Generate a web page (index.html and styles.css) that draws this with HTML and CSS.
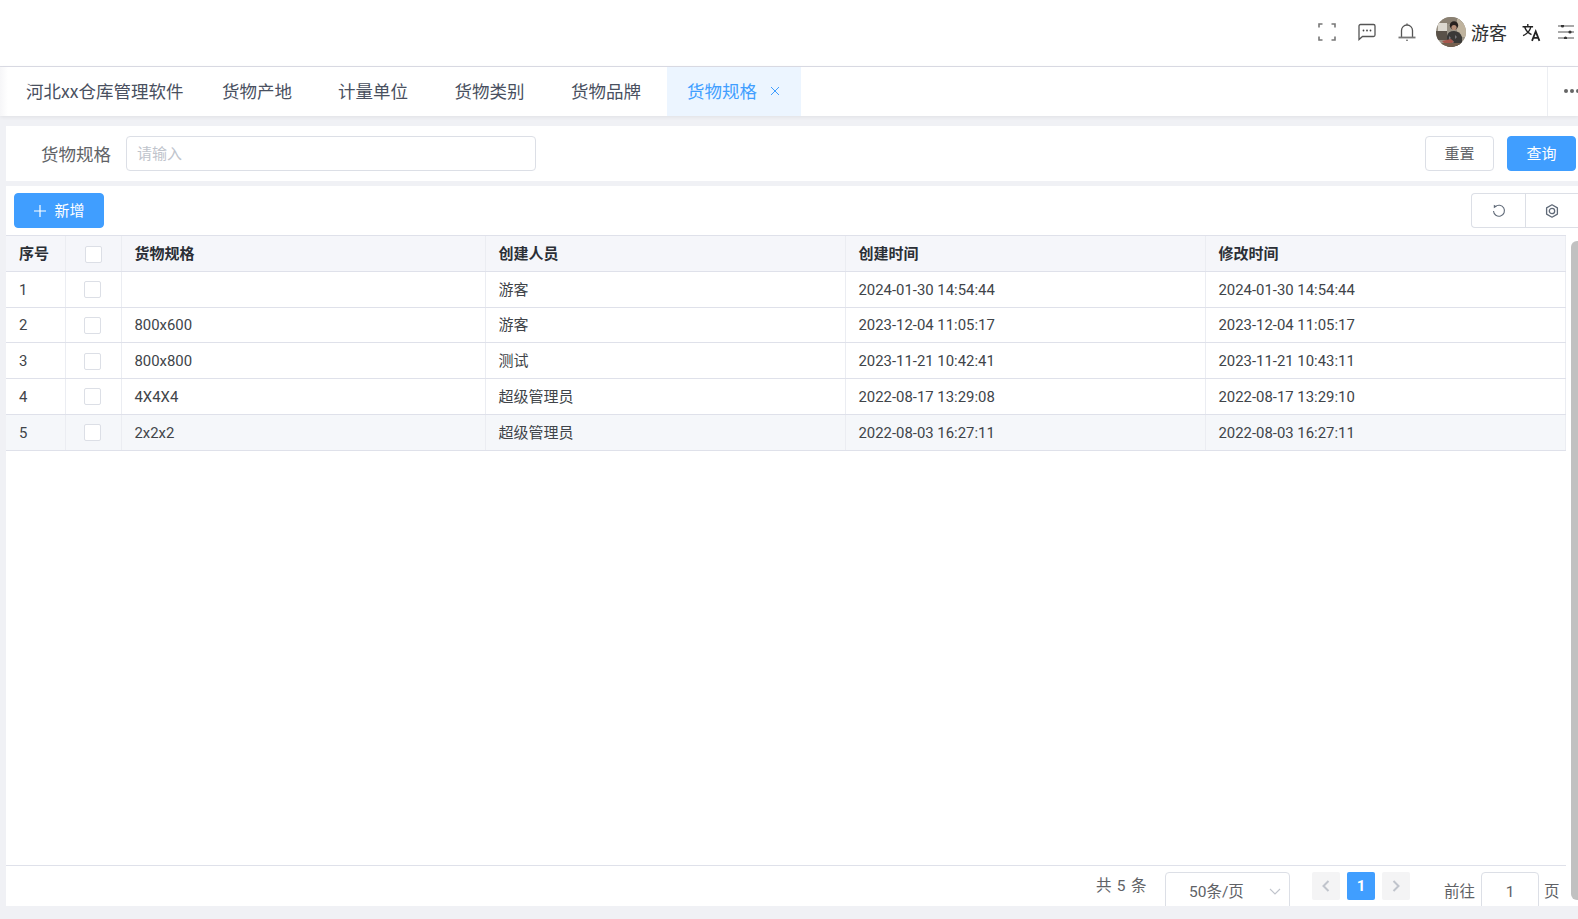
FILE: index.html
```html
<!DOCTYPE html>
<html lang="zh-CN">
<head>
<meta charset="utf-8">
<title>货物规格</title>
<link rel="stylesheet" href="styles.css">
</head>
<body>
<div class="app">
  <header class="topbar">
    <svg class="ti ti-full" viewBox="0 0 18 18"><path d="M1 4.500V1h3.500M13.500 1H17v3.500M17 13.500V17h-3.500M4.500 17H1v-3.500"/></svg>
    <svg class="ti ti-msg" viewBox="0 0 18 18"><path d="M1 16.500V3a1.500 1.500 0 0 1 1.500-1.500h13A1.500 1.500 0 0 1 17 3v9a1.500 1.500 0 0 1-1.500 1.500H4.500L1 16.500z"/><circle class="dot" cx="5.500" cy="7.500" r=".9"/><circle class="dot" cx="9" cy="7.500" r=".9"/><circle class="dot" cx="12.500" cy="7.500" r=".9"/></svg>
    <svg class="ti ti-bell" viewBox="0 0 18 18"><path d="M3.500 14V7.500a5.500 5.500 0 0 1 11 0V14M9 2V.5"/><path class="bar" d="M.5 14.500h17"/><circle class="dot" cx="9" cy="17.200" r=".8"/></svg>
    <svg class="avatar" viewBox="0 0 30 30">
      <defs><clipPath id="ac"><circle cx="15" cy="15" r="15"/></clipPath></defs>
      <g clip-path="url(#ac)">
        <rect width="30" height="30" fill="#9a9386"/>
        <rect x="0" y="0" width="30" height="7" fill="#8a8072"/>
        <rect x="2" y="6" width="9" height="8" fill="#dcd8cf"/>
        <rect x="0" y="14" width="11" height="9" fill="#5a5249"/>
        <rect x="21" y="2" width="9" height="18" fill="#bfb39e"/>
        <circle cx="18" cy="8.500" r="4.200" fill="#27211e"/>
        <circle cx="18" cy="10.500" r="2.600" fill="#b58d76"/>
        <path d="M11 30V19q1-5 7-5t8 6v10z" fill="#3a3937"/>
        <path d="M13 19l2 2-2 2zM19 18l2 2-2 2zM16 23l2 2-2 2z" fill="#77777a"/>
        <path d="M6 24l9-2 3 3-8 3z" fill="#a8574c"/>
        <rect x="0" y="26" width="30" height="4" fill="#75604f"/>
      </g>
    </svg>
    <span class="username">游客</span>
    <svg class="ti ti-lang" viewBox="0 0 18 18"><path d="M.5 3.500h10M5.500 1v2.500M8.500 3.500C7.500 7.500 4.500 10.500 1 12M2.500 3.500C3.500 7 6 9.500 9 11"/><path class="thick" d="M9.500 17l3.500-9 3.500 9M10.800 14h4.400"/></svg>
    <svg class="ti ti-set" viewBox="0 0 16 14"><path d="M0 1h16M0 7h16M0 13h16"/><circle class="dot2" cx="4.500" cy="1" r="1.600"/><circle class="dot2" cx="12" cy="7" r="1.600"/><circle class="dot2" cx="7.500" cy="13" r="1.600"/></svg>
  </header>

  <nav class="tabs">
    <span class="tab tab-first">河北xx仓库管理软件</span>
    <span class="tab tab-a">货物产地</span>
    <span class="tab tab-b">计量单位</span>
    <span class="tab tab-b">货物类别</span>
    <span class="tab tab-b">货物品牌</span>
    <span class="tab tab-active">货物规格<svg class="tab-x" viewBox="0 0 10 10"><path d="M1 1l8 8M9 1l-8 8"/></svg></span>
    <span class="tab-more"><i></i><i></i><i></i></span>
  </nav>

  <section class="search">
    <label class="search-label">货物规格</label>
    <div class="search-input">请输入</div>
    <span class="spacer"></span>
    <button class="btn">重置</button>
    <button class="btn btn-primary">查询</button>
  </section>

  <section class="panel">
    <div class="panel-tools">
      <button class="btn btn-primary btn-add"><svg class="plus" viewBox="0 0 12 12"><path d="M6 0v12M0 6h12"/></svg>新增</button>
      <span class="spacer"></span>
      <div class="tool-group">
        <span class="tool"><svg class="tool-ic" viewBox="0 0 14 14"><path d="M3.200 2.700A5.500 5.500 0 1 1 1.500 7"/><path class="fillp" d="M1.800 .8l3 1.800-3 1.700z"/></svg></span>
        <span class="tool"><svg class="tool-ic tool-gear" viewBox="0 0 14 14"><path d="M7 .8l5.400 3.100v6.200L7 13.200l-5.400-3.100V3.900z"/><circle cx="7" cy="7" r="2.700"/></svg></span>
      </div>
    </div>
    <div class="panel-body">
      <div class="main">
        <div class="table">
          <div class="row row-head">
            <div class="cell c1">序号</div><div class="cell c2"><span class="check check-head"></span></div><div class="cell c3">货物规格</div><div class="cell c4">创建人员</div><div class="cell c5">创建时间</div><div class="cell c6">修改时间</div>
          </div>
          <div class="row">
            <div class="cell c1">1</div><div class="cell c2"><span class="check"></span></div><div class="cell c3"></div><div class="cell c4">游客</div><div class="cell c5">2024-01-30 14:54:44</div><div class="cell c6">2024-01-30 14:54:44</div>
          </div>
          <div class="row">
            <div class="cell c1">2</div><div class="cell c2"><span class="check"></span></div><div class="cell c3">800x600</div><div class="cell c4">游客</div><div class="cell c5">2023-12-04 11:05:17</div><div class="cell c6">2023-12-04 11:05:17</div>
          </div>
          <div class="row">
            <div class="cell c1">3</div><div class="cell c2"><span class="check"></span></div><div class="cell c3">800x800</div><div class="cell c4">测试</div><div class="cell c5">2023-11-21 10:42:41</div><div class="cell c6">2023-11-21 10:43:11</div>
          </div>
          <div class="row">
            <div class="cell c1">4</div><div class="cell c2"><span class="check"></span></div><div class="cell c3">4X4X4</div><div class="cell c4">超级管理员</div><div class="cell c5">2022-08-17 13:29:08</div><div class="cell c6">2022-08-17 13:29:10</div>
          </div>
          <div class="row row-hover">
            <div class="cell c1">5</div><div class="cell c2"><span class="check"></span></div><div class="cell c3">2x2x2</div><div class="cell c4">超级管理员</div><div class="cell c5">2022-08-03 16:27:11</div><div class="cell c6">2022-08-03 16:27:11</div>
          </div>
        </div>
        <div class="pager">
          <span class="pg-total">共 5 条</span>
          <div class="pg-size">50条/页<svg class="pg-caret" viewBox="0 0 12 7"><path d="M1 1l5 5 5-5"/></svg></div>
          <span class="pg-btn"><svg class="chev" viewBox="0 0 8 12"><path d="M6.500 1L1.500 6l5 5"/></svg></span>
          <span class="pg-btn pg-on">1</span>
          <span class="pg-btn"><svg class="chev" viewBox="0 0 8 12"><path d="M1.500 1l5 5-5 5"/></svg></span>
          <span class="pg-goto">前往</span>
          <div class="pg-input">1</div>
          <span class="pg-unit">页</span>
        </div>
      </div>
      <div class="scroll"><div class="thumb"></div></div>
    </div>
  </section>
</div>
</body>
</html>
```
FILE: styles.css
```css
* { box-sizing: border-box; }
html, body { margin: 0; padding: 0; height: 100%; overflow: hidden; }
body {
  background: #f0f1f5;
  font-family: Roboto, "Noto Sans CJK SC", sans-serif;
  color: #303133;
}
.app { height: 919px; display: flex; flex-direction: column; }
.spacer { flex: 1; }

/* top bar */
.topbar {
  height: 67px;
  background: #fff;
  border-bottom: 1px solid #dcdde6;
  display: flex;
  align-items: center;
  padding: 0 4px 2px 1318px;
  flex: none;
}
.ti { fill: none; stroke: #555; stroke-width: 1.300; flex: none; }
.ti .dot { fill: #444; stroke: none; }
.ti .dot2 { fill: #333; stroke: none; }
.ti .thick { stroke-width: 1.700; stroke: #222; }
.ti .bar { stroke: #777; stroke-width: 1.800; }
.ti-full { width: 18px; height: 18px; margin-right: 22px; stroke: #777; stroke-width: 1.600; }
.ti-msg { width: 18px; height: 18px; margin-right: 22px; }
.ti-bell { width: 18px; height: 18px; margin-right: 20px; }
.avatar { width: 30px; height: 30px; margin-right: 5px; flex: none; }
.username { font-size: 18px; font-weight: 400; color: #303133; width: 36px; margin-right: 15px; white-space: nowrap; font-family: "Noto Sans CJK SC", sans-serif; }
.ti-lang { width: 19px; height: 19px; margin-right: 17px; stroke: #222; }
.ti-set { width: 16px; height: 14px; stroke: #555; stroke-width: 1.100; }

/* tabs */
.tabs {
  height: 49px;
  background: linear-gradient(90deg, #f6f6f8, #fff 8px);
  display: flex;
  align-items: stretch;
  flex: none;
  box-shadow: 0 1px 4px rgba(0, 0, 0, .07);
  position: relative;
  font-family: "Noto Sans CJK SC", sans-serif;
  font-size: 17.500px;
  color: #495060;
}
.tab { display: flex; align-items: center; white-space: nowrap; padding-bottom: 2px; }
.tab-first { padding-left: 26px; width: 222px; }
.tab-a { width: 116px; }
.tab-b { width: 116.500px; }
.tab-active {
  padding-left: 20px;
  width: 134px;
  background: #ecf5ff;
  color: #409eff;
}
.tabs .tab-b:nth-child(5) { width: 96px; }
.tab-x { width: 10px; height: 10px; margin-left: 13px; fill: none; stroke: #409eff; stroke-width: 1; }
.tab-more {
  margin-left: auto;
  width: 31px;
  border-left: 1px solid #eceef2;
  display: flex;
  align-items: center;
  gap: 2px;
  padding-left: 16px;
  padding-bottom: 2px;
}
.tab-more i { width: 4px; height: 4px; border-radius: 50%; background: #666; flex: none; }

/* search */
.search {
  margin: 10px 0 0 6px;
  height: 55px;
  background: #fff;
  display: flex;
  align-items: center;
  padding: 0 2px 0 35px;
  flex: none;
}
.search-label { font-family: "Noto Sans CJK SC", sans-serif; font-size: 17.500px; color: #606266; width: 85px; white-space: nowrap; padding-bottom: 1px; }
.search-input {
  width: 410px;
  height: 35px;
  border: 1px solid #dcdfe6;
  border-radius: 4px;
  padding-left: 10px;
  line-height: 31px;
  font-size: 15px;
  color: #c0c4cc;
  font-family: "Noto Sans CJK SC", sans-serif;
}
.btn {
  height: 35px;
  width: 69px;
  border: 1px solid #dcdfe6;
  border-radius: 4px;
  background: #fff;
  color: #606266;
  font-family: "Noto Sans CJK SC", sans-serif;
  font-size: 15px;
  padding: 0 0 2px;
  display: flex;
  align-items: center;
  justify-content: center;
}
.btn + .btn { margin-left: 13px; }
.btn-primary { background: #409eff; border-color: #409eff; color: #fff; }

/* panel */
.panel {
  margin: 5px 0 13px 6px;
  background: #fff;
  flex: 1;
  display: flex;
  flex-direction: column;
  min-height: 0;
}
.panel-tools { height: 49px; padding: 7px 0 0 8px; display: flex; align-items: flex-start; flex: none; }
.btn-add { width: 90px; height: 35px; padding-left: 1px; }
.plus { width: 12px; height: 12px; margin-right: 8px; margin-top: 2px; fill: none; stroke: #fff; stroke-width: 1.200; }
.tool-group { display: flex; height: 35px; border: 1px solid #dcdfe6; border-right: 0; border-radius: 4px 0 0 4px; }
.tool { width: 53px; display: flex; align-items: center; justify-content: center; }
.tool + .tool { border-left: 1px solid #dcdfe6; }
.tool-ic { width: 14px; height: 14px; fill: none; stroke: #606a78; stroke-width: 1.100; }
.tool-ic .fillp { fill: #606a78; stroke: none; }
.tool-gear { stroke-linejoin: round; stroke-width: 1.300; }
.panel-body { flex: 1; display: flex; min-height: 0; }
.main { width: 1560px; display: flex; flex-direction: column; min-height: 0; flex: none; }
.table { flex: 1; border-top: 1px solid #dfe1ea; font-size: 14.900px; }
.row {
  display: grid;
  grid-template-columns: 60px 56px 364px 360px 360px 360px;
  height: 35.750px;
  border-bottom: 1px solid #dfe1ea;
  color: #404449;
}
.row-head { background: #f5f6fa; font-weight: 700; color: #2b2f36; font-family: "Noto Sans CJK SC", sans-serif; font-size: 15px; }
.row-head .cell { padding-bottom: 2px; padding-top: 0; }
.row-hover { background: #f5f7fa; }
.cell { display: flex; align-items: center; padding-left: 12.500px; padding-top: 1px; border-right: 1px solid #ebedf2; white-space: nowrap; }
.c1 { padding-left: 13px; }
.row .c2 { padding: 1px 2px 0 0; justify-content: center; }
.row-head .c2 { padding: 2px 2px 0 0; }
.c4 { font-family: "Noto Sans CJK SC", sans-serif; font-size: 15px; padding-top: 0; padding-bottom: 2px; }
.row-head .c4 { font-weight: 700; }
.check { width: 17px; height: 17px; background: #fff; border: 1px solid #dcdfe6; border-radius: 2px; display: block; }
.check-head { margin-left: 1px; }
.pager {
  height: 41px;
  flex: none;
  border-top: 1px solid #dfe1ea;
  overflow: hidden;
  display: flex;
  align-items: flex-start;
  padding: 6px 0 0 1090px;
  font-family: "Noto Sans CJK SC", sans-serif;
  font-size: 15.500px;
  color: #606266;
}
.pg-total { line-height: 29px; width: 69px; white-space: nowrap; font-size: 15.500px; word-spacing: 1.500px; font-family: Roboto, "Noto Sans CJK SC", sans-serif; }
.pg-size {
  width: 125px;
  height: 40px;
  border: 1px solid #dcdfe6;
  border-radius: 4px;
  line-height: 38px;
  padding-left: 23px;
  position: relative;
  margin-right: 22px;
  flex: none;
  font-family: Roboto, "Noto Sans CJK SC", sans-serif;
}
.pg-caret { position: absolute; right: 8px; top: 15px; width: 12px; height: 7px; fill: none; stroke: #c0c4cc; stroke-width: 1.100; }
.pg-btn {
  width: 28px;
  height: 28px;
  border-radius: 2px;
  background: #f4f4f5;
  display: flex;
  align-items: center;
  justify-content: center;
  margin-right: 7px;
  flex: none;
}
.pg-on { background: #409eff; color: #fff; font-weight: 700; font-family: Roboto, sans-serif; font-size: 15px; }
.chev { width: 8px; height: 12px; fill: none; stroke: #c0c4cc; stroke-width: 2; }
.pg-goto { margin-left: 27px; width: 37px; line-height: 37px; white-space: nowrap; flex: none; }
.pg-input {
  width: 58px;
  height: 40px;
  border: 1px solid #dcdfe6;
  border-radius: 4px;
  text-align: center;
  line-height: 38px;
  flex: none;
  font-family: Roboto, sans-serif;
}
.pg-unit { margin-left: 5px; line-height: 37px; flex: none; }

/* scrollbar */
.scroll { flex: 1; padding: 6px 0 0 5px; height: 672px; }
.thumb { height: 659px; width: 7px; background: #c1c1c1; border-radius: 6px 0 0 6px; }
```
